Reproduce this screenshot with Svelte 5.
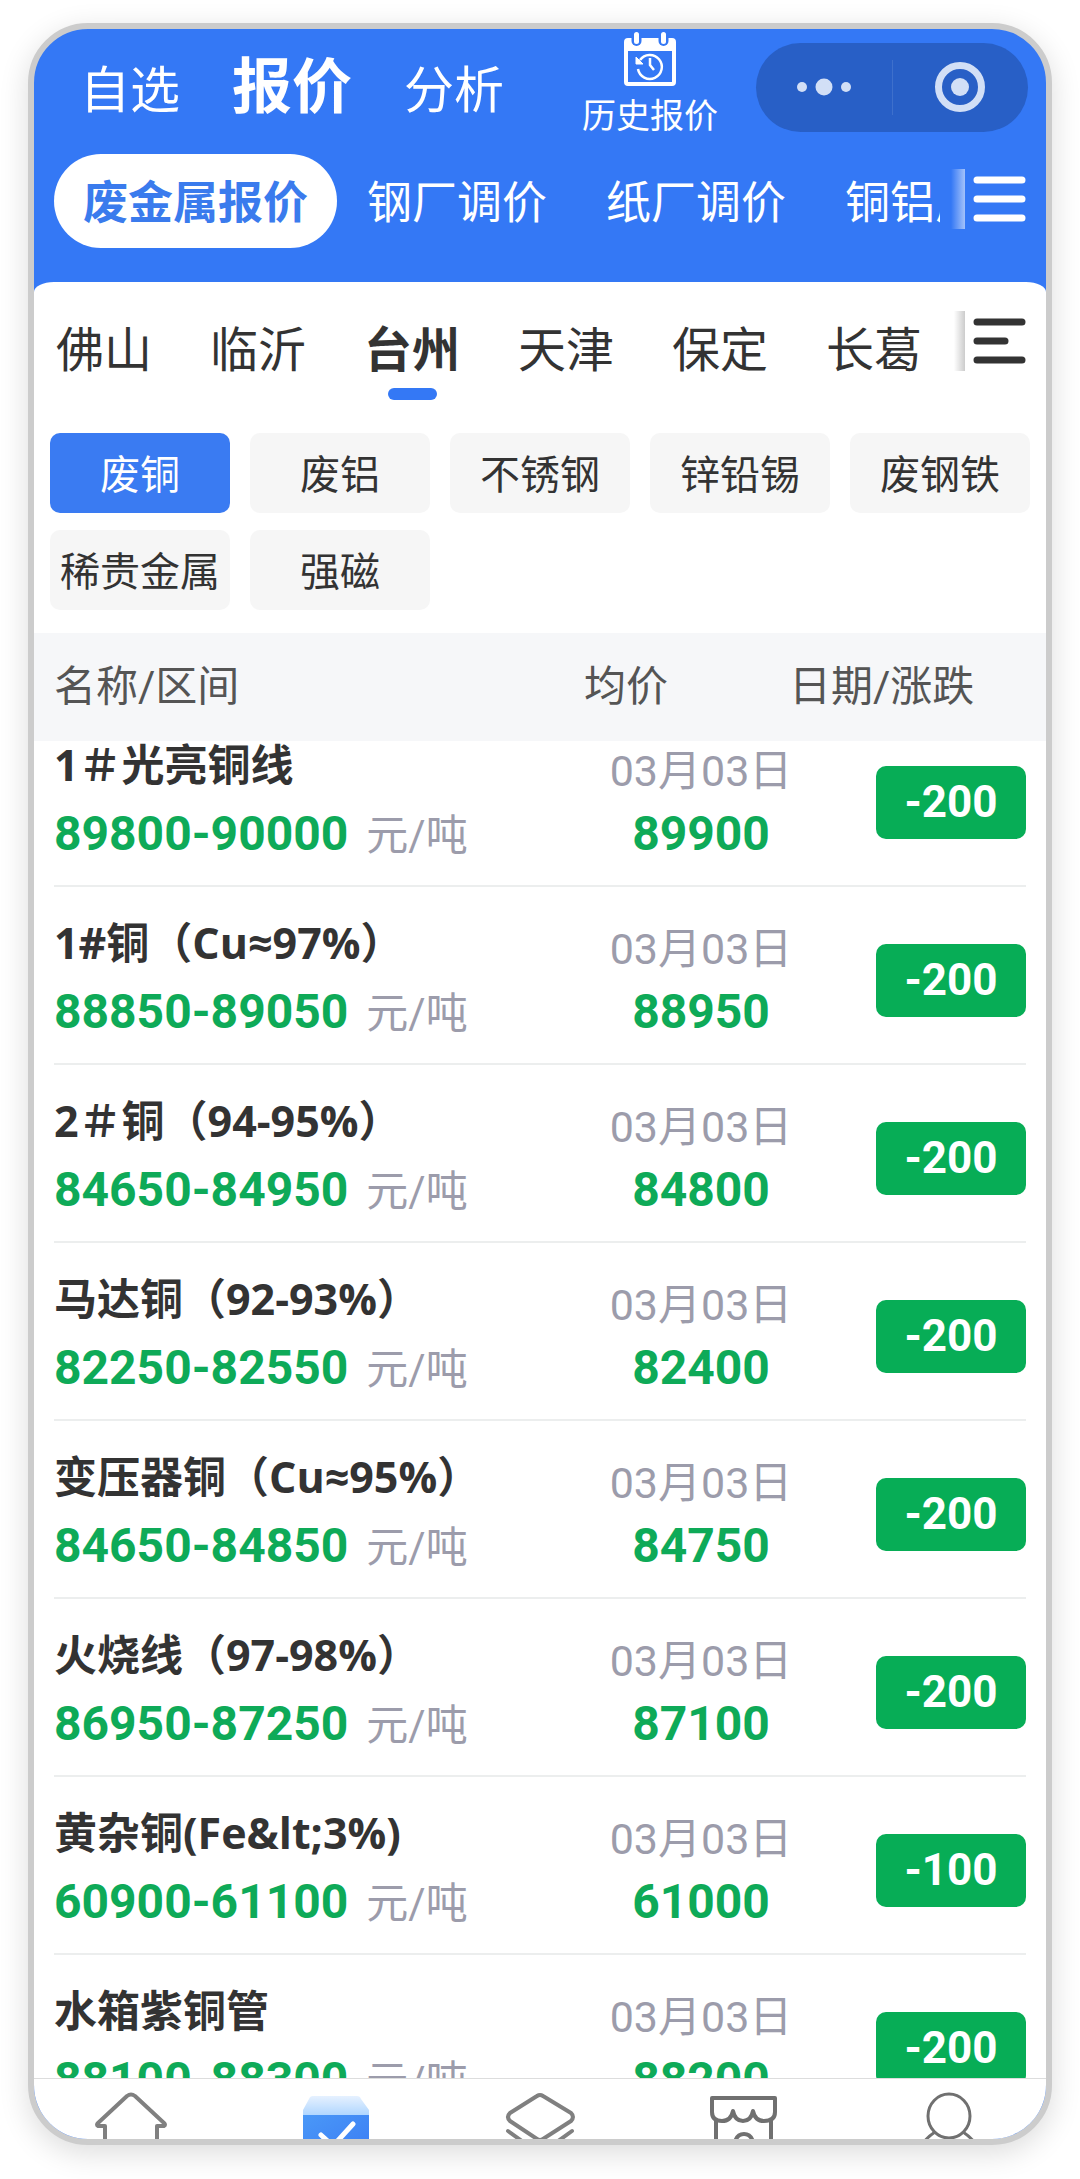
<script>
  const sections = ['自选', '报价', '分析'];
  let section = $state('报价');

  const categories = ['废金属报价', '钢厂调价', '纸厂调价', '铜铝厂调价'];
  let category = $state('废金属报价');

  const cities = ['佛山', '临沂', '台州', '天津', '保定', '长葛'];
  let city = $state('台州');

  const metals = ['废铜', '废铝', '不锈钢', '锌铅锡', '废钢铁', '稀贵金属', '强磁'];
  let metal = $state('废铜');

  const quotes = [
    { name: '1＃光亮铜线', range: '89800-90000', date: '03月03日', avg: 89900, change: -200 },
    { name: '1#铜（Cu≈97%）', range: '88850-89050', date: '03月03日', avg: 88950, change: -200 },
    { name: '2＃铜（94-95%）', range: '84650-84950', date: '03月03日', avg: 84800, change: -200 },
    { name: '马达铜（92-93%）', range: '82250-82550', date: '03月03日', avg: 82400, change: -200 },
    { name: '变压器铜（Cu≈95%）', range: '84650-84850', date: '03月03日', avg: 84750, change: -200 },
    { name: '火烧线（97-98%）', range: '86950-87250', date: '03月03日', avg: 87100, change: -200 },
    { name: '黄杂铜(Fe&lt;3%)', range: '60900-61100', date: '03月03日', avg: 61000, change: -100 },
    { name: '水箱紫铜管', range: '88100-88300', date: '03月03日', avg: 88200, change: -200 },
  ];
</script>

<main class="phone">
  <header class="head">
    <div class="topbar">
      <nav class="sections">
        {#each sections as s}
          <button class="section" class:active={s === section} onclick={() => (section = s)}>{s}</button>
        {/each}
      </nav>

      <button class="history">
        <svg width="52" height="54" viewBox="0 0 52 54" fill="none" aria-hidden="true">
          <rect x="2" y="8" width="48" height="44" rx="2" stroke="#fff" stroke-width="4" />
          <path d="M2 7h48v12H2z" fill="#fff" />
          <rect x="7.500" y="-2" width="10" height="16" rx="5" fill="#3478f5" />
          <rect x="34.500" y="-2" width="10" height="16" rx="5" fill="#3478f5" />
          <rect x="10" y="0" width="5" height="12" rx="2.500" fill="#fff" />
          <rect x="37" y="0" width="5" height="12" rx="2.500" fill="#fff" />
          <path d="M16 28a12 12 0 1 1-2 9" stroke="#fff" stroke-width="2.500" />
          <path d="M12 25v7h7z" fill="#fff" stroke="#fff" />
          <path d="M26 26v7l4 5" stroke="#fff" stroke-width="2.500" />
        </svg>
        <span>历史报价</span>
      </button>

      <div class="capsule">
        <button aria-label="更多">
          <svg width="56" height="20" viewBox="0 0 56 20" fill="#d2dff6">
            <circle cx="6" cy="10" r="5" />
            <circle cx="28" cy="10" r="8.500" />
            <circle cx="50" cy="10" r="5" />
          </svg>
        </button>
        <button aria-label="关闭">
          <svg width="52" height="52" viewBox="0 0 52 52" fill="none">
            <circle cx="26" cy="26" r="21.500" stroke="#d2dff6" stroke-width="7" />
            <circle cx="26" cy="26" r="9" fill="#d2dff6" />
          </svg>
        </button>
      </div>
    </div>

    <div class="bar">
      <div class="categories">
        {#each categories as c}
          <button class="category" class:active={c === category} onclick={() => (category = c)}>{c}</button>
        {/each}
      </div>
      <span class="fade light"></span>
      <button class="menu" aria-label="全部分类">
        <svg width="53" height="46" viewBox="0 0 53 46" stroke="#fff" stroke-width="7" stroke-linecap="round">
          <path d="M4 4h45M4 23h45M4 42h45" />
        </svg>
      </button>
    </div>
  </header>

  <section class="sheet">
    <div class="bar city-bar">
      <div class="cities">
        {#each cities as c}
          <button class="city" class:active={c === city} onclick={() => (city = c)}>{c}</button>
        {/each}
      </div>
      <span class="fade"></span>
      <button class="menu" aria-label="全部城市">
        <svg width="53" height="46" viewBox="0 0 53 46" stroke="#333" stroke-width="7" stroke-linecap="round">
          <path d="M4 4h45M4 23h28M4 42h45" />
        </svg>
      </button>
    </div>

    <div class="metals">
      {#each metals as m}
        <button class="metal" class:active={m === metal} onclick={() => (metal = m)}>{m}</button>
      {/each}
    </div>

    <table class="quotes">
      <thead>
        <tr>
          <th>名称/区间</th>
          <th>均价</th>
          <th>日期/涨跌</th>
        </tr>
      </thead>
      <tbody>
        {#each quotes as q}
          <tr>
            <td>
              <div class="name">{q.name}</div>
              <div class="price">{q.range}<span class="unit">元/吨</span></div>
            </td>
            <td class="avg">
              <div class="date">{q.date}</div>
              <div class="price">{q.avg}</div>
            </td>
            <td class="change"><span class="badge">{q.change}</span></td>
          </tr>
        {/each}
      </tbody>
    </table>
  </section>

  <nav class="tabbar">
    <a href="#home" aria-label="首页">
      <svg width="76" height="72" viewBox="0 0 76 72" fill="none" stroke="#808080" stroke-width="4" stroke-linejoin="round">
        <path d="M12 70V34H5q-2-1 0-3L34 4q4-3 8 0l29 27q2 2 0 3h-7v36z" />
      </svg>
    </a>
    <a href="#quotes" aria-label="报价">
      <svg width="76" height="72" viewBox="0 0 76 72" fill="none">
        <defs>
          <linearGradient id="lid" x1="0" y1="0" x2="0" y2="1">
            <stop offset="0" stop-color="#e6f1ff" />
            <stop offset="1" stop-color="#add5ff" />
          </linearGradient>
          <linearGradient id="box" x1="0" y1="0" x2="1" y2="1">
            <stop offset="0" stop-color="#4a98f7" />
            <stop offset="1" stop-color="#3b7cf4" />
          </linearGradient>
        </defs>
        <path d="M15 4h44q3 0 4 3l8 11v6H5v-6l6-11q1-3 4-3z" fill="url(#lid)" />
        <path d="M5 23h66v43H5z" fill="url(#box)" />
        <path d="M23 43l12 11 20-22" stroke="#fff" stroke-width="5" stroke-linecap="round" stroke-linejoin="round" />
      </svg>
    </a>
    <a href="#supply" aria-label="供求">
      <svg width="76" height="72" viewBox="0 0 76 72" fill="none" stroke="#808080" stroke-width="4" stroke-linecap="round" stroke-linejoin="round">
        <path d="M35 4q3-2 6 0l28 17q4 4 0 8L41 47q-3 2-6 0L8 29q-4-4 0-8z" />
        <path d="M6 39l29 21q3 2 6 0l29-21" />
      </svg>
    </a>
    <a href="#shop" aria-label="商铺">
      <svg width="76" height="72" viewBox="0 0 76 72" fill="none" stroke="#707070" stroke-width="4" stroke-linejoin="round">
        <path d="M6 6h63v14q0 9-11 9-9 0-11-10-2 10-10 10-8 0-10-10-2 10-11 10Q6 29 6 20z" />
        <path d="M10 28v40h55V28M29 66V50q2-8 9-8t9 8v16" />
      </svg>
    </a>
    <a href="#me" aria-label="我的">
      <svg width="76" height="72" viewBox="0 0 76 72" fill="none" stroke="#707070" stroke-width="3">
        <ellipse cx="38" cy="24" rx="21" ry="22" />
        <path d="M24 40Q6 52 6 70h64q0-18-18-30" />
      </svg>
    </a>
  </nav>
</main>

<style>
  :global(body) {
    margin: 0;
    background: #fff;
  }

  .phone {
    box-sizing: border-box;
    display: flex;
    flex-direction: column;
    height: calc(100vh - 57px);
    margin: 23px 28px 34px;
    border: 6px solid #ccc;
    border-radius: 60px;
    overflow: hidden;
    background: #3478f5;
    box-shadow: 0 8px 30px rgba(0, 0, 0, 0.14);
    font-family: Roboto, 'Noto Sans CJK SC', sans-serif;
    color: #333;
  }

  button {
    flex: none;
    margin: 0;
    padding: 0;
    border: 0;
    background: none;
    font: inherit;
    color: inherit;
    white-space: nowrap;
    cursor: pointer;
  }

  svg {
    display: block;
  }

  .head {
    padding-bottom: 34px;
    color: #fff;
  }

  .topbar {
    display: flex;
    align-items: center;
    height: 116px;
    margin-bottom: 9px;
    padding: 0 18px 0 46px;
  }

  .sections {
    display: flex;
    align-items: baseline;
    gap: 52px;
    margin-right: auto;
    padding-top: 4px;
  }

  .section {
    font-size: 50px;
    line-height: 60px;
  }

  .section.active {
    font-size: 60px;
    font-weight: 700;
  }

  .history {
    display: flex;
    flex-direction: column;
    align-items: center;
    gap: 12px;
    align-self: flex-start;
    margin: 3px 38px 0 0;
    font-size: 34px;
    line-height: 36px;
  }

  .capsule {
    display: flex;
    width: 272px;
    height: 89px;
    border-radius: 45px;
    background: #285fc6;
  }

  .capsule button {
    display: flex;
    flex: 1;
    align-items: center;
    justify-content: center;
  }

  .capsule button + button {
    position: relative;
  }

  .capsule button + button::before {
    content: '';
    position: absolute;
    left: 0;
    width: 1px;
    height: 55px;
    background: #3e70cc;
  }

  .bar {
    display: flex;
    align-items: center;
    padding: 0 20px;
  }

  .categories,
  .cities {
    display: flex;
    flex: 1;
    min-width: 0;
    margin-right: 11px;
    overflow: hidden;
  }

  .categories {
    gap: 1px;
  }

  .category {
    height: 94px;
    padding: 0 29px 4px;
    border-radius: 47px;
    font-size: 45px;
  }

  .category.active {
    background: #fff;
    color: #3a7bed;
    font-weight: 700;
  }

  .fade,
  .menu {
    margin-bottom: 4px;
  }

  .fade {
    flex: none;
    width: 14px;
    height: 60px;
    margin-right: 8px;
    background: linear-gradient(to right, rgba(0, 0, 0, 0) 20%, rgba(0, 0, 0, 0.2));
  }

  .fade.light {
    background: linear-gradient(to right, rgba(255, 255, 255, 0), rgba(255, 255, 255, 0.55));
  }

  .sheet {
    display: flex;
    flex: 1;
    flex-direction: column;
    min-height: 0;
    border-radius: 20px 20px 0 0 / 10px 10px 0 0;
    background: #fff;
  }

  .city-bar {
    align-items: flex-start;
    padding-top: 29px;
  }

  .city-bar .menu {
    padding-top: 7px;
  }

  .cities {
    gap: 58px;
    padding: 16px 0 0 2px;
  }

  .city {
    display: flex;
    flex-direction: column;
    align-items: center;
    gap: 13px;
    font-size: 48px;
    line-height: 48px;
  }

  .city.active {
    font-weight: 700;
  }

  .city.active::after {
    content: '';
    width: 49px;
    height: 12px;
    border-radius: 6px;
    background: #3478f5;
  }

  .metals {
    display: grid;
    grid-template-columns: repeat(5, 1fr);
    gap: 17px 20px;
    padding: 33px 16px 23px;
  }

  .metal {
    height: 80px;
    padding-bottom: 2px;
    border-radius: 10px;
    background: #f6f6f6;
    font-size: 40px;
  }

  .metal.active {
    background: #3a7bf2;
    color: #fff;
  }

  .quotes {
    display: flex;
    flex: 1;
    flex-direction: column;
    min-height: 0;
  }

  thead {
    position: relative;
    z-index: 1;
    background: #f6f7f9;
  }

  thead tr {
    display: grid;
    grid-template-columns: 530fr 205fr 237fr;
    padding: 0 20px;
  }

  th {
    padding: 0;
    color: #555;
    font-size: 42px;
    font-weight: 400;
    line-height: 108px;
    text-align: left;
  }

  /* list is scrolled a little, so the first row slides under the heading */
  tbody {
    display: block;
    flex: 1;
    min-height: 0;
    margin-top: -32px;
    overflow: hidden;
  }

  tbody tr {
    display: grid;
    grid-template-columns: 530fr 234fr 208fr;
    align-items: end;
    margin: 0 20px;
    padding: 34px 0 23px;
    border-bottom: 2px solid #eceeee;
  }

  td {
    padding: 0;
    white-space: nowrap;
  }

  .name {
    margin-bottom: 19px;
    font-family: 'Open Sans', 'Noto Sans CJK SC', sans-serif;
    font-size: 43px;
    font-weight: 700;
    line-height: 44px;
  }

  .price {
    color: #0eaa58;
    font-size: 48px;
    font-weight: 700;
    line-height: 56px;
  }

  .unit {
    margin-left: 18px;
    color: #9c9cab;
    font-size: 42px;
    font-weight: 400;
    line-height: 42px;
  }

  .avg {
    text-align: center;
  }

  .date {
    margin-bottom: 13px;
    color: #9c9cab;
    font-size: 43px;
    line-height: 44px;
  }

  .change {
    display: flex;
    align-self: center;
    justify-content: flex-end;
  }

  .badge {
    width: 150px;
    border-radius: 10px;
    background: #07ad56;
    color: #fff;
    font-size: 44px;
    font-weight: 700;
    line-height: 73px;
    text-align: center;
  }

  .tabbar {
    display: flex;
    flex: none;
    height: 60px;
    margin: 0 -5px;
    border-top: 1px solid #ddd;
    background: #fff;
    overflow: hidden;
  }

  .tabbar a {
    display: flex;
    flex: 1;
    justify-content: center;
    padding-top: 13px;
  }
</style>
